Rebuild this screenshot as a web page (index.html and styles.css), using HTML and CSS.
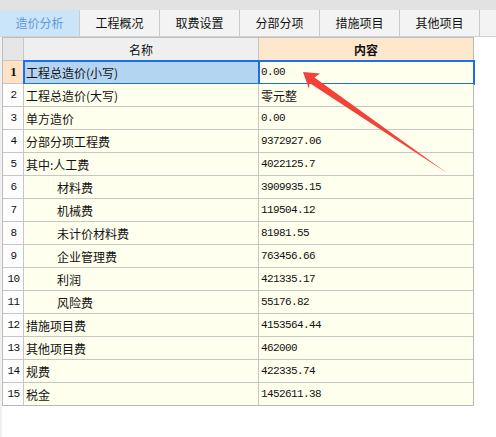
FILE: index.html
```html
<!DOCTYPE html>
<html lang="zh">
<head>
<meta charset="utf-8">
<link rel="stylesheet" href="styles.css">
</head>
<body>
<div class="topstrip"></div>
<div class="tabs">
  <div class="tab active">造价分析</div>
  <div class="tab">工程概况</div>
  <div class="tab">取费设置</div>
  <div class="tab">分部分项</div>
  <div class="tab">措施项目</div>
  <div class="tab">其他项目</div>
  <div class="tab tab-rest"></div>
</div>
<div class="main">
  <div class="grid">
    <div class="hc corner"></div>
    <div class="hc hname">名称</div>
    <div class="hc hcontent">内容</div>

    <div class="num num-sel">1</div><div class="name sel">工程总造价(小写)</div><div class="val sel-val">0.00</div>
    <div class="num">2</div><div class="name">工程总造价(大写)</div><div class="val cjk">零元整</div>
    <div class="num">3</div><div class="name">单方造价</div><div class="val">0.00</div>
    <div class="num">4</div><div class="name">分部分项工程费</div><div class="val">9372927.06</div>
    <div class="num">5</div><div class="name">其中:人工费</div><div class="val">4022125.7</div>
    <div class="num">6</div><div class="name indent">材料费</div><div class="val">3909935.15</div>
    <div class="num">7</div><div class="name indent">机械费</div><div class="val">119504.12</div>
    <div class="num">8</div><div class="name indent">未计价材料费</div><div class="val">81981.55</div>
    <div class="num">9</div><div class="name indent">企业管理费</div><div class="val">763456.66</div>
    <div class="num">10</div><div class="name indent">利润</div><div class="val">421335.17</div>
    <div class="num">11</div><div class="name indent">风险费</div><div class="val">55176.82</div>
    <div class="num">12</div><div class="name">措施项目费</div><div class="val">4153564.44</div>
    <div class="num">13</div><div class="name">其他项目费</div><div class="val">462000</div>
    <div class="num">14</div><div class="name">规费</div><div class="val">422335.74</div>
    <div class="num">15</div><div class="name">税金</div><div class="val">1452611.38</div>
  </div>
</div>
<svg class="arrow" width="496" height="437" viewBox="0 0 496 437">
  <polygon points="303,72 320,73.5 314.5,77.5 447,173 309.5,83 309,89" fill="#f2423a"/>
</svg>
</body>
</html>
```
FILE: styles.css
```css
html, body {
  margin: 0;
  padding: 0;
}
body {
  width: 496px;
  height: 437px;
  overflow: hidden;
  background: #ffffff;
  font-family: "Noto Sans CJK SC", "Liberation Sans", sans-serif;
  font-size: 12px;
  color: #111;
  position: relative;
}
.topstrip {
  height: 10px;
  background: #e2e2e2;
}
.tabs {
  display: flex;
  height: 26px;
  background: #f3f3f3;
  border-bottom: 1px solid #d2d2d2;
}
.tab {
  flex: 0 0 79px;
  border-right: 1px solid #cacaca;
  background: #f3f3f3;
  display: flex;
  align-items: center;
  justify-content: center;
  line-height: 1;
}
.tab.active {
  background: #cce4f7;
  color: #5a9be0;
}
.tab-rest {
  flex: 1 1 auto;
  border-right: none;
}
.main {
  border-left: 2px solid #f0f0f0;
  height: 400px;
}
.grid {
  display: grid;
  grid-template-columns: 21px 235px 215px;
  grid-auto-rows: 23px;
  width: 472px;
  border-top: 1px solid #bdbdbd;
  border-left: 1px solid #bdbdbd;
  box-sizing: border-box;
}
.grid > div {
  box-sizing: border-box;
  border-right: 1px solid #c6c6c6;
  border-bottom: 1px solid #c6c6c6;
  display: flex;
  align-items: center;
  white-space: nowrap;
  overflow: visible;
}
.hc {
  justify-content: center;
  background: #efefef;
}
.corner {
  background: #e6e6e6;
}
.hcontent {
  background: #fde8cc;
  font-weight: bold;
}
.num {
  justify-content: center;
  background: #fdfdfd;
  font-family: "Liberation Mono", monospace;
  font-size: 11px;
  letter-spacing: -0.6px;
  padding-left: 1px;
}
.num-sel {
  background: #fde3c4;
  font-family: "Liberation Serif", serif;
  font-weight: bold;
  font-size: 13px;
  letter-spacing: 0;
}
.name {
  background: #ffffee;
  padding-left: 2px;
}
.name.indent {
  padding-left: 33px;
}
.val {
  background: #ffffee;
  padding-left: 2px;
  font-family: "Liberation Mono", monospace;
  font-size: 11px;
  letter-spacing: -0.6px;
}
.val.cjk {
  font-family: "Noto Sans CJK SC", sans-serif;
  font-size: 12px;
  letter-spacing: 0;
}
.sel {
  background: #b4d5f2;
  outline: 2px solid #1c6fe6;
  outline-offset: -1px;
}
.sel-val {
  outline: 2px solid #1c6fe6;
  outline-offset: -1px;
}
.grid > .num:nth-last-child(3),
.grid > .name:nth-last-child(2),
.grid > .val:last-child {
  border-bottom-color: #b8b8b8;
}
.grid > .val,
.grid > .hcontent {
  border-right-color: #b8b8b8;
}
.arrow {
  position: absolute;
  left: 0;
  top: 0;
  pointer-events: none;
}
```
